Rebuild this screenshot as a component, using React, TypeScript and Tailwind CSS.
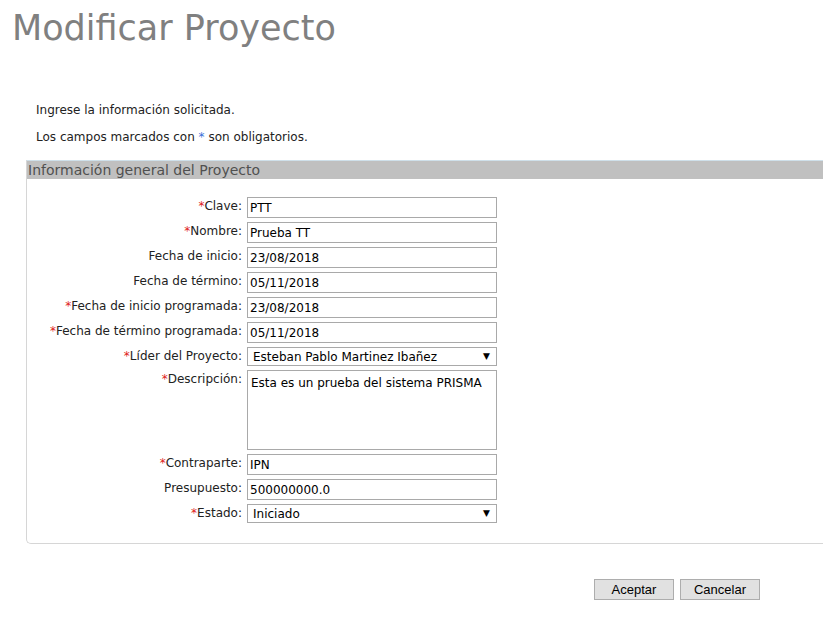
import React from 'react'

const font = { fontFamily: '"DejaVu Sans", Verdana, sans-serif' }

type Row = { label: string; req?: boolean; value: string; kind?: 'input' | 'select' | 'area' }

const rows: Row[] = [
  { label: 'Clave', req: true, value: 'PTT' },
  { label: 'Nombre', req: true, value: 'Prueba TT' },
  { label: 'Fecha de inicio', value: '23/08/2018' },
  { label: 'Fecha de término', value: '05/11/2018' },
  { label: 'Fecha de inicio programada', req: true, value: '23/08/2018' },
  { label: 'Fecha de término programada', req: true, value: '05/11/2018' },
  { label: 'Líder del Proyecto', req: true, value: 'Esteban Pablo Martinez Ibañez', kind: 'select' },
  { label: 'Descripción', req: true, value: 'Esta es un prueba del sistema PRISMA', kind: 'area' },
  { label: 'Contraparte', req: true, value: 'IPN' },
  { label: 'Presupuesto', value: '500000000.0' },
  { label: 'Estado', req: true, value: 'Iniciado', kind: 'select' },
]

function Field({ row }: { row: Row }) {
  if (row.kind === 'select') {
    return (
      <div className="flex h-[19px] w-[250px] items-center justify-between border border-[#a9a9a9] bg-white pl-[5px] pr-[6px] text-[12px] text-black">
        <span>{row.value}</span>
        <span className="text-[9px]">▼</span>
      </div>
    )
  }
  if (row.kind === 'area') {
    return (
      <div className="h-[80px] w-[250px] border border-[#a9a9a9] bg-white px-[3px] pt-[3px] text-[12px] text-black">
        {row.value}
      </div>
    )
  }
  return (
    <div className="flex h-[21px] w-[250px] items-center border border-[#a9a9a9] bg-white px-[2px] text-[12px] text-black">
      {row.value}
    </div>
  )
}

export default function App() {
  return (
    <div className="h-[631px] w-[823px] overflow-hidden bg-white text-[#222]" style={font}>
      <h1 className="pl-[12px] pt-[6px] text-[35px] leading-[44px] text-[#808080]">Modificar Proyecto</h1>

      <div className="pl-[36px] pt-[53px] text-[12px]">
        <p className="leading-[15px]">Ingrese la información solicitada.</p>
        <p className="mt-[12px] leading-[15px]">
          Los campos marcados con <span className="text-[#3a6fd8]">*</span> son obligatorios.
        </p>
      </div>

      <div className="ml-[26px] mt-[15px] w-[820px] rounded-bl-[5px] border-b border-l border-t border-[#d6d6d6] border-t-[#cfe0ea] pb-[20px]">
        <div className="flex h-[18px] items-center bg-[#c0c0c0] pl-[1px] text-[14px] text-[#505050]">
          Información general del Proyecto
        </div>
        <div className="mt-[18px] flex flex-col gap-[4px]">
          {rows.map((r) => (
            <div key={r.label} className="flex items-start">
              <div className="w-[220px] pr-[5px] pt-[1px] text-right text-[12px] leading-[16px] text-[#222]">
                {r.req && <span className="text-[#e02020]">*</span>}
                {r.label}:
              </div>
              <Field row={r} />
            </div>
          ))}
        </div>
      </div>

      <div className="mt-[35px] flex gap-[6px] pl-[594px]" style={{ fontFamily: '"Liberation Sans", Arial, sans-serif' }}>
        <button className="h-[21px] w-[80px] border border-[#adadad] bg-[#e1e1e1] text-[13px] text-black">Aceptar</button>
        <button className="h-[21px] w-[80px] border border-[#adadad] bg-[#e1e1e1] text-[13px] text-black">Cancelar</button>
      </div>
    </div>
  )
}
